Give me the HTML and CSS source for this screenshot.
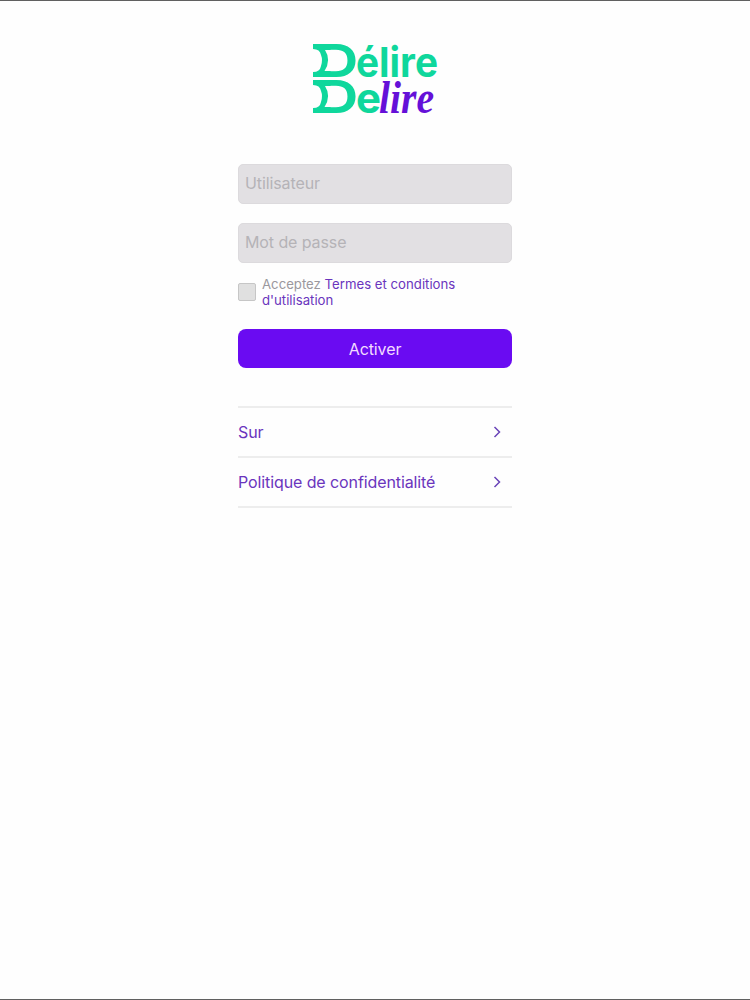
FILE: index.html
```html
<!DOCTYPE html>
<html lang="fr">
<head>
    <meta charset="UTF-8">
    <meta name="viewport" content="width=device-width, initial-scale=1.0">
    <title>Délire Delire</title>
    <link rel="stylesheet" href="styles.css">
</head>
<body>
    <main class="container">
        <svg class="logo" width="130" height="76" viewBox="310 40 130 76" role="img" aria-label="Délire Delire">
            <g class="logo-green">
                <text class="logo-cap" x="319" y="77" textLength="39" lengthAdjust="spacingAndGlyphs">D</text>
                <text class="logo-text" x="356" y="76.5" textLength="82" lengthAdjust="spacingAndGlyphs">élire</text>
                <path d="M313 44H326V77H313V72Q320 72 321 66Q323 60 321 55Q320 49 313 49Z"/>
                <path class="logo-cut" d="M325 50H335V71H324.500Q331.500 60 325 50Z"/>
                <text class="logo-cap" x="319" y="113" textLength="39" lengthAdjust="spacingAndGlyphs">D</text>
                <text class="logo-text" x="356" y="112.5" textLength="25" lengthAdjust="spacingAndGlyphs">e</text>
                <path d="M313 80H326V113H313V108Q320 108 321 102Q323 96 321 91Q320 85 313 85Z"/>
                <path class="logo-cut" d="M325 86H335V107H324.500Q331.500 96 325 86Z"/>
            </g>
            <text class="logo-script" x="379" y="112.5" textLength="55" lengthAdjust="spacingAndGlyphs">lire</text>
        </svg>

        <form class="login-form">
            <input type="text" class="input" placeholder="Utilisateur" aria-label="Utilisateur">
            <input type="password" class="input" placeholder="Mot de passe" aria-label="Mot de passe">
            <div class="terms">
                <input type="checkbox" class="checkbox" id="terms">
                <label for="terms">Acceptez <a href="#">Termes et conditions d'utilisation</a></label>
            </div>
            <button type="button" class="activate-btn">Activer</button>
        </form>

        <nav class="links">
            <a href="#" class="link">
                <span>Sur</span>
                <svg class="chevron" width="8" height="12" viewBox="0 0 8 12"><path d="M1.500 1L6.500 6L1.500 11"/></svg>
            </a>
            <a href="#" class="link">
                <span>Politique de confidentialité</span>
                <svg class="chevron" width="8" height="12" viewBox="0 0 8 12"><path d="M1.500 1L6.500 6L1.500 11"/></svg>
            </a>
        </nav>
    </main>
</body>
</html>
```
FILE: styles.css
```css
* {
    box-sizing: border-box;
}

body {
    margin: 0;
    height: 100vh;
    background-color: #fefefe;
    border-top: 1px solid #606060;
    border-bottom: 1px solid #606060;
    font-family: Inter, "Liberation Sans", sans-serif;
    overflow: hidden;
}

.container {
    width: 274px;
    margin: 0 auto;
    padding-top: 39px;
}

.logo {
    display: block;
    margin: 0 auto 48px;
    overflow: visible;
}

.logo-green {
    fill: #0fd79c;
}

.logo-cut {
    fill: #fefefe;
}

.logo-cap {
    font-size: 45.5px;
    font-weight: 700;
}

.logo-text {
    font-size: 41px;
    font-weight: 700;
}

.logo-script {
    font-family: "Liberation Serif", serif;
    font-size: 47px;
    font-style: italic;
    font-weight: bold;
    fill: #6510d8;
}

.login-form {
    display: flex;
    flex-direction: column;
}

.input {
    width: 100%;
    height: 40px;
    margin-bottom: 19px;
    padding: 0 6px 2px;
    background-color: #e2e0e3;
    border: 1px solid #dcdadd;
    border-radius: 5px;
    font-family: inherit;
    font-size: 16px;
    letter-spacing: -0.1px;
}

.input::placeholder {
    color: #b5b3b7;
}

.input:focus {
    outline: none;
    border-color: #6a0bf2;
}

.terms {
    display: flex;
    align-items: center;
    gap: 7px;
    margin-top: -6px;
    font-size: 13.2px;
    line-height: 16px;
    color: #9b989d;
}

.terms a {
    color: #6a35bd;
    text-decoration: none;
}

.checkbox {
    appearance: none;
    flex: none;
    width: 18px;
    height: 18px;
    margin: 0 -1px 0 0;
    background-color: #e0e0e0;
    border: 1px solid #c6c6c6;
    border-radius: 2px;
}

.checkbox:checked {
    background-color: #6a0bf2;
}

.activate-btn {
    height: 39px;
    margin-top: 21px;
    background-color: #6a0bf2;
    border: none;
    border-radius: 8px;
    color: #f3dcff;
    font-family: inherit;
    font-size: 16px;
    letter-spacing: -0.1px;
    cursor: pointer;
}

.links {
    margin-top: 38px;
    border-top: 2px solid #ededed;
}

.link {
    display: flex;
    align-items: center;
    justify-content: space-between;
    height: 50px;
    padding-right: 11px;
    border-bottom: 2px solid #ededed;
    color: #6a35bd;
    font-size: 16px;
    letter-spacing: -0.1px;
    text-decoration: none;
}

.chevron {
    fill: none;
    stroke: #6a45b8;
    stroke-width: 1.5;
}
```
